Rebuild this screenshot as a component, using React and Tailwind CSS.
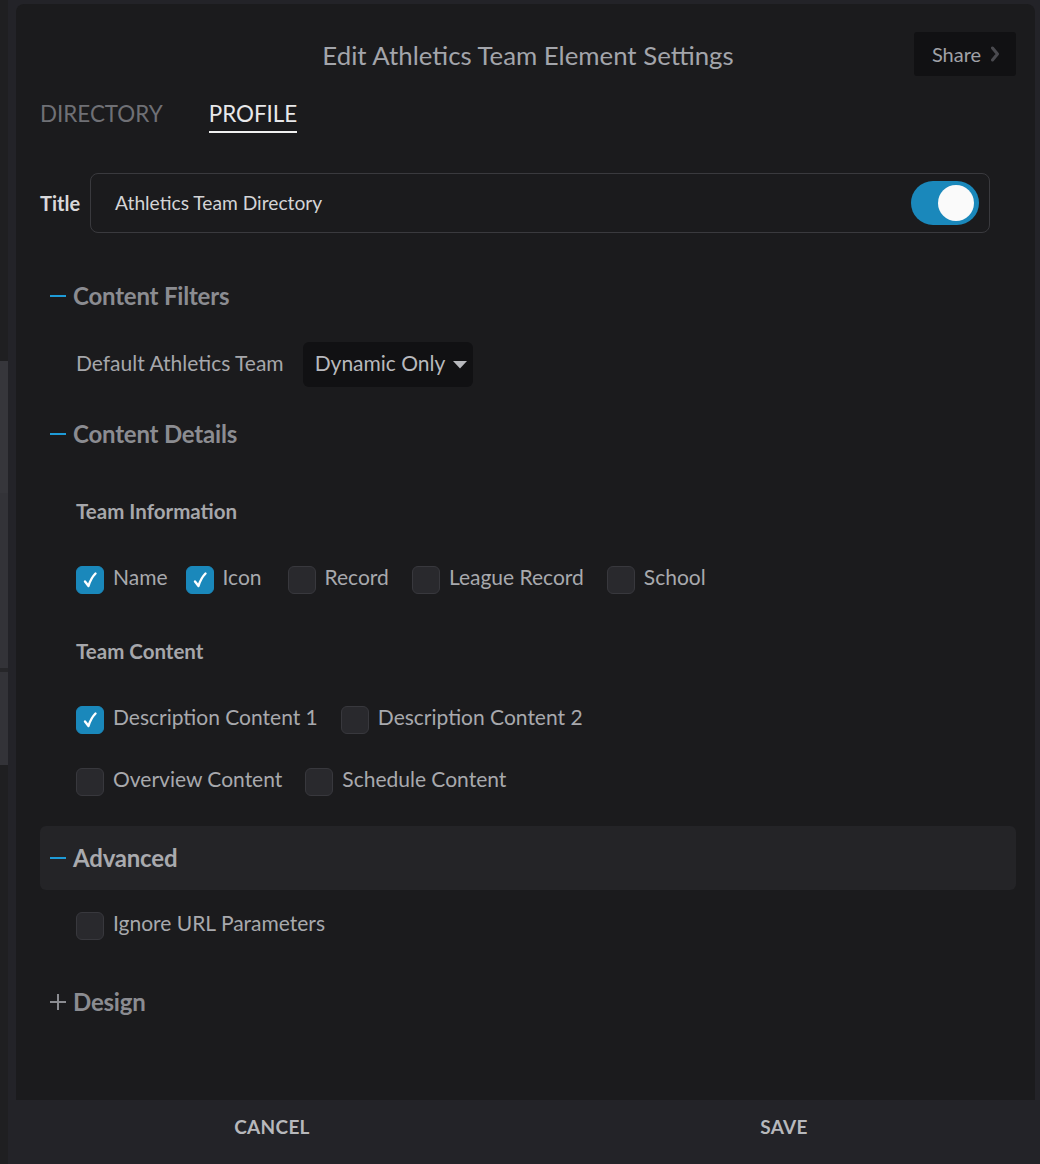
import { useState } from 'react';

const font = { fontFamily: 'Lato, "Open Sans", "Liberation Sans", sans-serif' };

function Check({ checked, label, onToggle, className = '' }) {
  return (
    <button type="button" onClick={onToggle} className={`flex h-[28px] items-center gap-[9px] ${className}`}>
      <span
        className={`flex h-[28px] w-[28px] items-center justify-center rounded-[6px] border ${
          checked ? 'border-[#1a88bb] bg-[#1a88bb]' : 'border-[#38383d] bg-[#29292d]'
        }`}
      >
        {checked && (
          <svg width="16" height="18" viewBox="0 0 16 18" fill="none">
            <path d="M3 10.5 L6.5 15 C8 10 10.5 5.5 13.5 2.5" stroke="#fff" strokeWidth="2.4" strokeLinecap="round" strokeLinejoin="round" />
          </svg>
        )}
      </span>
      <span className="pb-[6px] text-[21px] leading-[22px] text-[#a8a9ad]">{label}</span>
    </button>
  );
}

function SectionHeader({ open, children, className = '' }) {
  return (
    <div className={`flex h-[32px] items-center gap-[7px] pl-[10px] ${className}`}>
      {open ? (
        <span className="h-[2px] w-4 bg-[#1e9bd7]" />
      ) : (
        <span className="relative h-4 w-4">
          <span className="absolute left-0 top-[7px] h-[2px] w-4 bg-[#8b8c91]" />
          <span className="absolute left-[7px] top-0 h-4 w-[2px] bg-[#8b8c91]" />
        </span>
      )}
      <span className="text-[24px] font-bold leading-[32px] tracking-[-0.2px]">{children}</span>
    </div>
  );
}

export default function App() {
  const [tab, setTab] = useState('profile');
  const [titleOn, setTitleOn] = useState(true);
  const [checks, setChecks] = useState({
    name: true,
    icon: true,
    record: false,
    league: false,
    school: false,
    desc1: true,
    desc2: false,
    overview: false,
    schedule: false,
    ignoreUrl: false,
  });
  const toggle = (k) => setChecks((c) => ({ ...c, [k]: !c[k] }));

  return (
    <div className="flex h-[1164px] w-[1040px] overflow-hidden bg-[#1f1f21]" style={font}>
      {/* page behind the dialog */}
      <div className="flex w-2 flex-col">
        <div className="h-[361px]" />
        <div className="h-[132px] bg-[#36363b]" />
        <div className="h-[175px] bg-[#333338]" />
        <div className="h-[4px] bg-[#262629]" />
        <div className="h-[93px] bg-[#333338]" />
      </div>

      <div className="flex flex-1 flex-col bg-[#232328] pt-1">
        <div className="ml-2 mr-[5px] flex flex-1 flex-col rounded-t-lg bg-[#1b1b1d] pl-6 pr-[19px]">
          {/* header */}
          <div className="mt-[28px] grid h-[44px] grid-cols-[1fr_auto_1fr] items-center">
            <div />
            <h1 className="pt-[2px] text-[25.8px] leading-[32px] text-[#a3a5ab]">Edit Athletics Team Element Settings</h1>
            <div className="flex justify-end">
              <button className="flex h-[44px] w-[102px] items-center justify-center gap-[9px] rounded-[3px] bg-[#111113] pl-[2px]">
                <span className="text-[20px] text-[#a0a2a7]">Share</span>
                <svg width="10" height="16" viewBox="0 0 10 16" fill="none">
                  <path d="M2.5 2 L7.5 8 L2.5 14" stroke="#4a4a4f" strokeWidth="3" strokeLinecap="round" strokeLinejoin="round" />
                </svg>
              </button>
            </div>
          </div>

          {/* tabs */}
          <div className="mt-[24px] flex gap-[46px]">
            {[
              ['directory', 'DIRECTORY'],
              ['profile', 'PROFILE'],
            ].map(([k, l]) => (
              <button
                key={k}
                onClick={() => setTab(k)}
                className={`border-b-2 pb-[3px] text-[22.4px] leading-[28px] ${
                  tab === k ? 'border-[#f0f0f0] text-[#e8e8ea]' : 'border-transparent text-[#6f7075]'
                }`}
              >
                {l}
              </button>
            ))}
          </div>

          {/* title row */}
          <div className="mt-[40px] flex items-center gap-[10px]">
            <span className="text-[20px] font-bold text-[#d8d8da]">Title</span>
            <div className="flex h-[60px] w-[900px] items-center justify-between rounded-[8px] border border-[#3a3a3e] pl-[24px] pr-[10px]">
              <span className="text-[19.2px] text-[#d4d4d6]">Athletics Team Directory</span>
              <button
                onClick={() => setTitleOn(!titleOn)}
                className={`flex h-[44px] w-[68px] items-center rounded-full px-[5px] ${
                  titleOn ? 'justify-end bg-[#1a88bb]' : 'justify-start bg-[#3a3a3e]'
                }`}
              >
                <span className="h-[36px] w-[36px] rounded-full bg-[#fafafa]" />
              </button>
            </div>
          </div>

          {/* content filters */}
          <SectionHeader open className="mt-[47px] text-[#8b8c91]">Content Filters</SectionHeader>
          <div className="mt-[30px] flex items-center gap-[19px] pl-9">
            <span className="pb-[4px] text-[21px] text-[#a6a7ab]">Default Athletics Team</span>
            <button className="flex h-[45px] items-center gap-[8px] rounded-[6px] bg-[#111113] pl-[12px] pr-[6px]">
              <span className="pb-[4px] text-[21px] text-[#b8b9bd]">Dynamic Only</span>
              <svg width="14" height="8" viewBox="0 0 14 8">
                <path d="M0 0 H14 L7 7.5 Z" fill="#b8b9bd" />
              </svg>
            </button>
          </div>

          {/* content details */}
          <SectionHeader open className="mt-[31px] text-[#8b8c91]">Content Details</SectionHeader>
          <div className="pl-9">
            <div className="mt-[49px] text-[20.5px] font-bold leading-[24px] text-[#a6a7ab]">Team Information</div>
            <div className="mt-[43px] flex gap-x-[23px]">
              <Check checked={checks.name} label="Name" onToggle={() => toggle('name')} className="mr-[-5px]" />
              <Check checked={checks.icon} label="Icon" onToggle={() => toggle('icon')} className="mr-[3px]" />
              <Check checked={checks.record} label="Record" onToggle={() => toggle('record')} />
              <Check checked={checks.league} label="League Record" onToggle={() => toggle('league')} />
              <Check checked={checks.school} label="School" onToggle={() => toggle('school')} />
            </div>
            <div className="mt-[45px] text-[20.5px] font-bold leading-[24px] text-[#a6a7ab]">Team Content</div>
            <div className="mt-[43px] flex gap-x-[23px]">
              <Check checked={checks.desc1} label="Description Content 1" onToggle={() => toggle('desc1')} />
              <Check checked={checks.desc2} label="Description Content 2" onToggle={() => toggle('desc2')} />
            </div>
            <div className="mt-[34px] flex gap-x-[23px]">
              <Check checked={checks.overview} label="Overview Content" onToggle={() => toggle('overview')} />
              <Check checked={checks.schedule} label="Schedule Content" onToggle={() => toggle('schedule')} />
            </div>
          </div>

          {/* advanced */}
          <div className="mt-[30px] flex h-[64px] items-center rounded-[6px] bg-[#242427]">
            <SectionHeader open className="text-[#a9aaae]">Advanced</SectionHeader>
          </div>
          <div className="mt-[22px] pl-9">
            <Check checked={checks.ignoreUrl} label="Ignore URL Parameters" onToggle={() => toggle('ignoreUrl')} />
          </div>

          {/* design */}
          <SectionHeader className="mt-[46px] text-[#8b8c91]">Design</SectionHeader>
        </div>

        {/* footer */}
        <div className="ml-2 grid h-16 grid-cols-2 items-center pb-[10px]">
          <button className="text-[19px] font-bold tracking-[0.3px] text-[#b7b8bc]">CANCEL</button>
          <button className="text-[19px] font-bold tracking-[0.3px] text-[#b7b8bc]">SAVE</button>
        </div>
      </div>
    </div>
  );
}
